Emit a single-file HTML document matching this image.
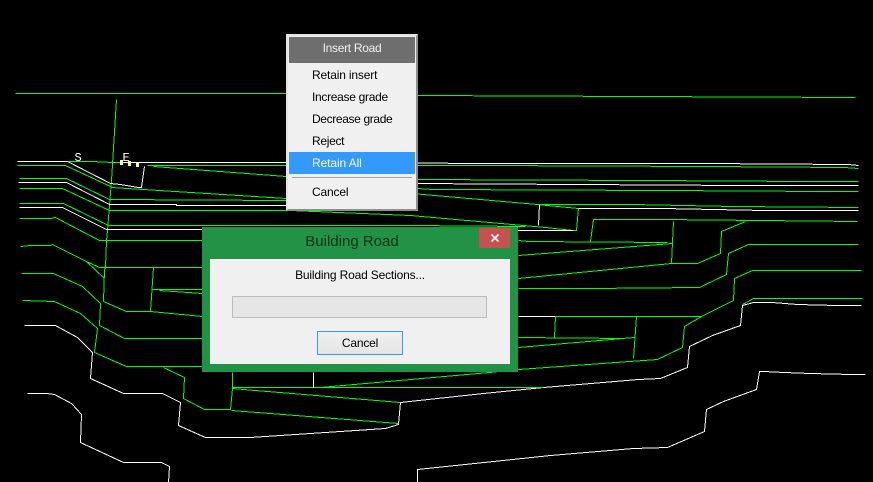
<!DOCTYPE html>
<html>
<head>
<meta charset="utf-8">
<style>
html,body{margin:0;padding:0;background:#000;}
body{width:873px;height:482px;overflow:hidden;position:relative;font-family:"Liberation Sans",sans-serif;font-size:12px;color:#000;}
svg.c{position:absolute;left:0;top:0;}
.g{fill:none;stroke:#00ff00;stroke-width:1;}
.w{fill:none;stroke:#fff;stroke-width:1;}
.a{position:absolute;white-space:nowrap;}
#menu{left:286px;top:34px;width:128px;height:173px;background:#f0f0f0;border:2px solid;border-color:#e4e4e4 #8f8f8f #8f8f8f #e4e4e4;}
#dlg{left:202px;top:227px;width:316px;height:145px;background:#229246;}
.it{left:24px;line-height:16px;height:16px;color:#000;}
</style>
</head>
<body>
<svg class="c" width="873" height="482" viewBox="0 0 873 482" shape-rendering="crispEdges">
<g transform="translate(.5,.5)">
<polyline class="g" points="15,93 286,93 417,95 855,97"/>
<polyline class="g" points="116,99 111,180 107,230 106,240 105,267 104,270 103,301"/>
<polyline class="w" points="17,161 67,161 110,183 120,184 138,187 141,187 144,166"/>
<polyline class="w" points="123,162 286,162 501,163 703,163 848,164 858,165"/>
<polyline class="g" points="67,161 91,161 112,162 123,162"/>
<polyline class="g" points="17,165 65,165 110,186"/>
<polyline class="g" points="147,165 481,165 705,166 844,167 858,168"/>
<polyline class="g" points="153,166 286,176 417,188 432,189 662,190 825,191 858,191"/>
<polyline class="g" points="19,178 66,178 109,199 286,200"/>
<polyline class="w" points="18,182 66,182 109,204 176,204 176,205 300,205"/>
<polyline class="g" points="19,188 62,188 109,210 290,210 410,215 523,225 545,227 563,229 573,230"/>
<polyline class="g" points="111,187 286,198 417,208"/>
<polyline class="g" points="19,203 63,203 108,225 410,225 525,226"/>
<polyline class="w" points="19,207 62,207 106,229 529,230 573,230"/>
<polyline class="g" points="19,218 50,218 55,217 99,240 202,240"/>
<polyline class="g" points="410,179 646,180 805,181 858,181"/>
<polyline class="w" points="410,183 577,184 741,185 858,185"/>
<polyline class="g" points="400,192 537,204 547,205 578,208"/>
<polyline class="w" points="539,204 538,225"/>
<polyline class="g" points="578,208 576,230 573,230"/>
<polyline class="g" points="537,204 632,204 733,206 858,207"/>
<polyline class="w" points="578,208 663,208 764,210 858,210"/>
<polyline class="g" points="593,219 590,241"/>
<polyline class="g" points="593,219 662,219 857,221"/>
<polyline class="g" points="518,240 528,241 667,242"/>
<polyline class="g" points="518,255 672,243"/>
<polyline class="g" points="673,221 671,263"/>
<polyline class="g" points="518,278 671,263 697,263 720,253 721,231 745,221"/>
<polyline class="g" points="518,288 589,288 699,287 726,274 728,253 748,244 858,244"/>
<polyline class="w" points="518,316 555,316"/>
<polyline class="g" points="555,316 701,316 684,326 682,347 657,359 518,369"/>
<polyline class="g" points="701,316 733,300 734,278 752,270 861,270"/>
<polyline class="g" points="555,316 554,337"/>
<polyline class="g" points="636,316 633,358"/>
<polyline class="g" points="518,337 625,338"/>
<polyline class="g" points="518,347 634,337"/>
<polyline class="g" points="742,304 753,298 862,298"/>
<polyline class="w" points="861,305 836,305 797,304 772,302 753,302 742,305 740,325 712,335 689,346 687,367 660,378 638,379 543,387 483,393 400,402 398,424 385,428 250,437 205,437 178,425 180,402 162,393 123,393 90,378 92,352 77,337 55,325 24,325"/>
<polyline class="g" points="150,366 202,366"/>
<polyline class="g" points="163,367 184,377 183,398 204,409 230,409 232,388 232,372"/>
<polyline class="g" points="232,387 543,387"/>
<polyline class="g" points="232,388 243,389 400,402"/>
<polyline class="g" points="231,410 398,423"/>
<polyline class="w" points="313,372 313,387"/>
<polyline class="g" points="320,387 489,372 518,369"/>
<polyline class="w" points="27,393 46,393 54,394 71,403 81,414 80,442 123,462 161,462 169,466 168,482"/>
<polyline class="g" points="20,246 30,245 50,245 52,244 86,261 99,267 202,267"/>
<polyline class="g" points="86,261 104,278"/>
<polyline class="g" points="21,273 53,273 82,286 100,303 99,325 124,338 202,338"/>
<polyline class="g" points="22,300 54,301 80,313 97,328 94,352 126,366 202,366"/>
<polyline class="g" points="103,301 126,311 150,311 202,316"/>
<polyline class="g" points="153,267 150,311"/>
<polyline class="g" points="152,289 202,289"/>
<polyline class="g" points="159,290 202,293"/>
<polyline class="w" points="417,482 417,469 550,455 633,448 667,447 704,431 706,409 723,401 756,389 759,371 763,371 784,372 810,373 851,374 865,374"/>
</g>
<g fill="#ffff80">
<rect x="120" y="160" width="3" height="5"/>
<rect x="128" y="161" width="3" height="5"/>
<rect x="136" y="163" width="3" height="4"/>
</g>
<text x="74.5" y="161" fill="#fff" font-family="Liberation Mono, monospace" font-size="12">S</text>
<text x="122.5" y="161" fill="#fff" font-family="Liberation Mono, monospace" font-size="12">E</text>
</svg>

<div class="a" id="menu">
  <div class="a" style="left:1px;top:1px;width:126px;height:26px;background:#6e6e6e;color:#efefef;text-align:center;line-height:22px;letter-spacing:-.3px;">Insert Road</div>
  <div class="a it" style="top:31px;letter-spacing:-.16px;">Retain insert</div>
  <div class="a it" style="top:53px;letter-spacing:-.3px;">Increase grade</div>
  <div class="a it" style="top:75px;letter-spacing:-.36px;">Decrease grade</div>
  <div class="a it" style="top:97px;letter-spacing:-.3px;">Reject</div>
  <div class="a" style="left:1px;top:116px;width:126px;height:22px;background:#3399ff;"></div>
  <div class="a it" style="top:119px;color:#fff;letter-spacing:-.1px;">Retain All</div>
  <div class="a" style="left:4px;top:141px;width:120px;height:1px;background:#a0a0a0;"></div>
  <div class="a it" style="top:148px;letter-spacing:-.17px;">Cancel</div>
</div>

<div class="a" id="dlg">
  <div class="a" style="left:0;top:3px;width:300px;text-align:center;font-size:15px;line-height:24px;color:#0a3316;">Building Road</div>
  <div class="a" style="left:277px;top:1px;width:31px;height:20px;background:#c75050;">
    <svg width="31" height="20" style="position:absolute;left:0;top:0"><path d="M12.5 6.5L19.5 13.5M19.5 6.5L12.5 13.5" stroke="#fff" stroke-width="1.7" fill="none"/></svg>
  </div>
  <div class="a" style="left:8px;top:32px;width:300px;height:105px;background:#f0f0f0;">
    <div class="a" style="left:0;top:8px;width:300px;text-align:center;line-height:16px;letter-spacing:-.17px;">Building Road Sections...</div>
    <div class="a" style="left:22px;top:37px;width:253px;height:20px;background:#e6e6e6;border:1px solid #bcbcbc;"></div>
    <div class="a" style="left:107px;top:72px;width:84px;height:22px;border:1px solid #3399ff;background:linear-gradient(#f0f0f0,#e5e5e5);text-align:center;line-height:22px;letter-spacing:-.2px;">Cancel</div>
  </div>
</div>
</body>
</html>
